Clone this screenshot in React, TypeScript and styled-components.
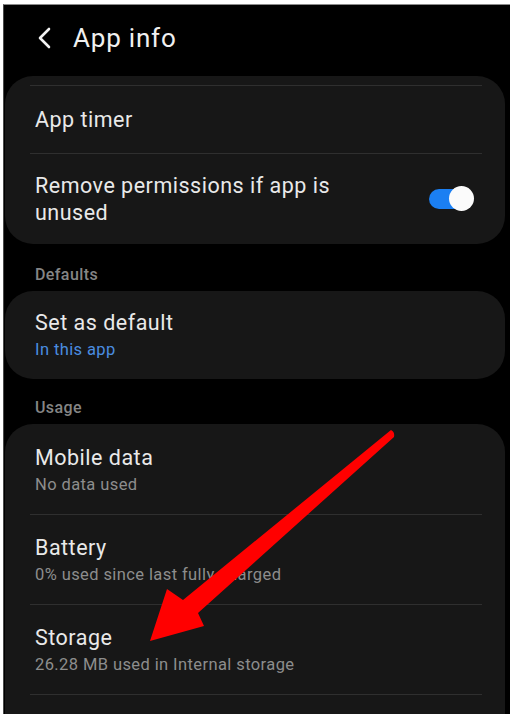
import React from "react";
import styled, { createGlobalStyle } from "styled-components";

const GlobalStyle = createGlobalStyle`
  html, body {
    margin: 0;
    padding: 0;
    background: #ffffff;
  }
  body {
    font-family: Roboto, "Noto Sans", "Liberation Sans", sans-serif;
    -webkit-font-smoothing: antialiased;
  }
`;

const Screen = styled.div`
  position: relative;
  margin: 4px 0 0 3px;
  width: 507px;
  height: 710px;
  background: #000;
  border-top: 1px solid #8a8a8a;
  border-left: 1px solid #4a4a4a;
  box-sizing: border-box;
  overflow: hidden;
  display: flex;
  flex-direction: column;
  padding: 0 5px 0 1px;
`;

const Header = styled.header`
  height: 66px;
  flex-shrink: 0;
  display: flex;
  align-items: center;
  gap: 20px;
  padding: 0 0 0 32px;
  margin-bottom: 5px;
  color: #f2f2f2;
`;

const Title = styled.h1`
  margin: 0;
  font-size: 26px;
  font-weight: 400;
  letter-spacing: 0.8px;
  color: #f0f0f0;
`;

const Card = styled.section<{ $open?: boolean }>`
  background: #171717;
  border-radius: ${({ $open }) => ($open ? "28px 28px 0 0" : "28px")};
  flex-shrink: 0;
  ${({ $open }) => ($open ? "flex: 1;" : "")}
  overflow: hidden;
`;

const Divider = styled.div<{ $top?: number }>`
  height: 1px;
  background: #2f2f2f;
  margin: ${({ $top }) => $top ?? 0}px 23px 0 25px;
`;

const Row = styled.div<{ $h: number }>`
  height: ${({ $h }) => $h}px;
  display: flex;
  align-items: center;
  justify-content: space-between;
  padding: 0 32px 0 30px;
`;

const RowTitle = styled.div`
  font-size: 21.5px;
  line-height: 27px;
  letter-spacing: 0.5px;
  color: #e9e9e9;
  max-width: 330px;
`;

const RowSub = styled.div<{ $accent?: boolean }>`
  font-size: 16.5px;
  line-height: 28px;
  letter-spacing: 0.4px;
  color: ${({ $accent }) => ($accent ? "#4a8de0" : "#8d8d8d")};
`;

const DetailRow = styled.div<{ $top?: number; $bottom?: number }>`
  display: flex;
  flex-direction: column;
  padding: ${({ $top }) => $top ?? 19}px 30px ${({ $bottom }) => $bottom ?? 15}px;
`;

const SectionLabel = styled.div<{ $h: number }>`
  height: ${({ $h }) => $h}px;
  display: flex;
  align-items: flex-end;
  padding: 0 0 7px 30px;
  box-sizing: border-box;
  font-size: 16px;
  font-weight: 500;
  letter-spacing: 0.4px;
  color: #858585;
  flex-shrink: 0;
`;

const Toggle = styled.div`
  position: relative;
  width: 44px;
  height: 20px;
  border-radius: 10px;
  background: #1b7ff2;
  flex-shrink: 0;
  &::after {
    content: "";
    position: absolute;
    right: -1px;
    top: -3px;
    width: 25px;
    height: 25px;
    border-radius: 50%;
    background: #fbfbfb;
  }
`;

const ArrowLayer = styled.svg`
  position: absolute;
  left: 0;
  top: 0;
  pointer-events: none;
`;

const BackIcon = () => (
  <svg width="16" height="22" viewBox="0 0 16 22">
    <polyline
      points="12,2 3,11 12,20"
      fill="none"
      stroke="#f2f2f2"
      strokeWidth="2.6"
      strokeLinecap="round"
      strokeLinejoin="round"
    />
  </svg>
);

const usage = [
  { title: "Mobile data", sub: "No data used" },
  { title: "Battery", sub: "0% used since last fully charged" },
  { title: "Storage", sub: "26.28 MB used in Internal storage" },
];

export default function App() {
  return (
    <>
      <GlobalStyle />
      <Screen>
        <Header>
          <BackIcon />
          <Title>App info</Title>
        </Header>

        <Card>
          <Divider $top={9} />
          <Row $h={67}>
            <RowTitle>App timer</RowTitle>
          </Row>
          <Divider />
          <Row $h={90}>
            <RowTitle>Remove permissions if app is unused</RowTitle>
            <Toggle />
          </Row>
        </Card>

        <SectionLabel $h={47}>Defaults</SectionLabel>

        <Card>
          <DetailRow $top={18} $bottom={15}>
            <RowTitle>Set as default</RowTitle>
            <RowSub $accent>In this app</RowSub>
          </DetailRow>
        </Card>

        <SectionLabel $h={45}>Usage</SectionLabel>

        <Card $open>
          {usage.map((u, i) => (
            <React.Fragment key={u.title}>
              {i > 0 && <Divider />}
              <DetailRow $top={i === 0 ? 20 : 19}>
                <RowTitle>{u.title}</RowTitle>
                <RowSub>{u.sub}</RowSub>
              </DetailRow>
            </React.Fragment>
          ))}
          <Divider />
        </Card>

        <ArrowLayer width="507" height="710" viewBox="4 5 507 710">
          <path
            d="M391 430 Q395 432 394 437 L198 613 L204 626 L150 641 L167 589 L183 600 Z"
            fill="#ff0000"
          />
        </ArrowLayer>
      </Screen>
    </>
  );
}
